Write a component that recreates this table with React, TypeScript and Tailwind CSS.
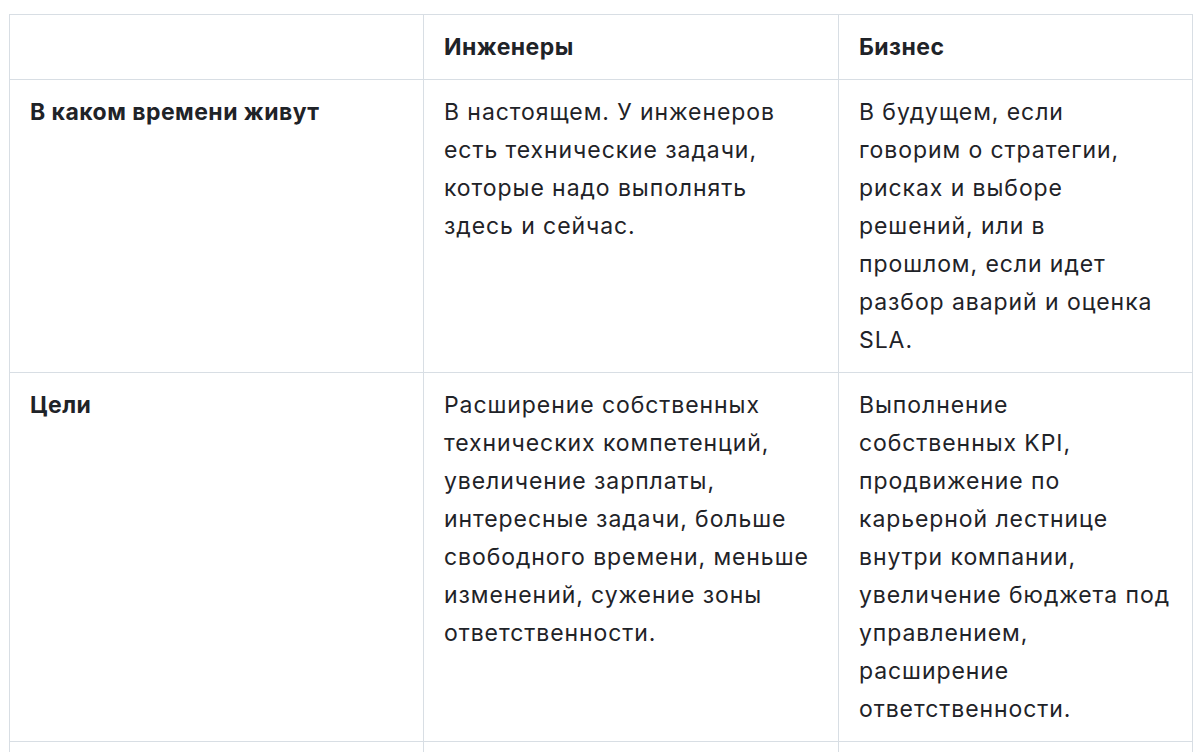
import React from 'react';

interface Row {
  title: string;
  engineers: string[];
  business: string[];
}

// строки разбиты вручную, как в исходной таблице
const rows: Row[] = [
  {
    title: 'В каком времени живут',
    engineers: ['В настоящем. У инженеров', 'есть технические задачи,', 'которые надо выполнять', 'здесь и сейчас.'],
    business: [
      'В будущем, если',
      'говорим о стратегии,',
      'рисках и выборе',
      'решений, или в',
      'прошлом, если идет',
      'разбор аварий и оценка',
      'SLA.',
    ],
  },
  {
    title: 'Цели',
    engineers: [
      'Расширение собственных',
      'технических компетенций,',
      'увеличение зарплаты,',
      'интересные задачи, больше',
      'свободного времени, меньше',
      'изменений, сужение зоны',
      'ответственности.',
    ],
    business: [
      'Выполнение',
      'собственных KPI,',
      'продвижение по',
      'карьерной лестнице',
      'внутри компании,',
      'увеличение бюджета под',
      'управлением,',
      'расширение',
      'ответственности.',
    ],
  },
  {
    title: '',
    engineers: [],
    business: [],
  },
];

const cell = 'border border-[#d8dee4] px-[20px] py-[13px] align-top text-left';
const head = 'font-bold tracking-[0.02em]';

const Lines: React.FC<{ lines: string[] }> = ({ lines }) => (
  <>
    {lines.length === 0 ? (
      <span className="block">{'\u00a0'}</span>
    ) : (
      lines.map((l, i) => (
        <span key={i} className="block whitespace-nowrap">
          {l}
        </span>
      ))
    )}
  </>
);

const App: React.FC = () => {
  return (
    <div
      className="h-screen bg-white pl-[9px] pt-[14px] text-[23px] leading-[38px] tracking-[0.04em] text-[#1f2328] overflow-hidden"
      style={{ fontFamily: 'Inter, "Noto Sans", sans-serif' }}
    >
      <table className="border-collapse w-[1183px] table-fixed">
        <colgroup>
          <col className="w-[414px]" />
          <col className="w-[415px]" />
          <col className="w-[354px]" />
        </colgroup>
        <thead>
          <tr>
            <th className={`${cell} ${head}`}>{'\u00a0'}</th>
            <th className={`${cell} ${head}`}>Инженеры</th>
            <th className={`${cell} ${head}`}>Бизнес</th>
          </tr>
        </thead>
        <tbody>
          {rows.map((row, i) => (
            <tr key={i}>
              <td className={`${cell} ${head}`}>{row.title || '\u00a0'}</td>
              <td className={cell}>
                <Lines lines={row.engineers} />
              </td>
              <td className={cell}>
                <Lines lines={row.business} />
              </td>
            </tr>
          ))}
        </tbody>
      </table>
    </div>
  );
};

export default App;
